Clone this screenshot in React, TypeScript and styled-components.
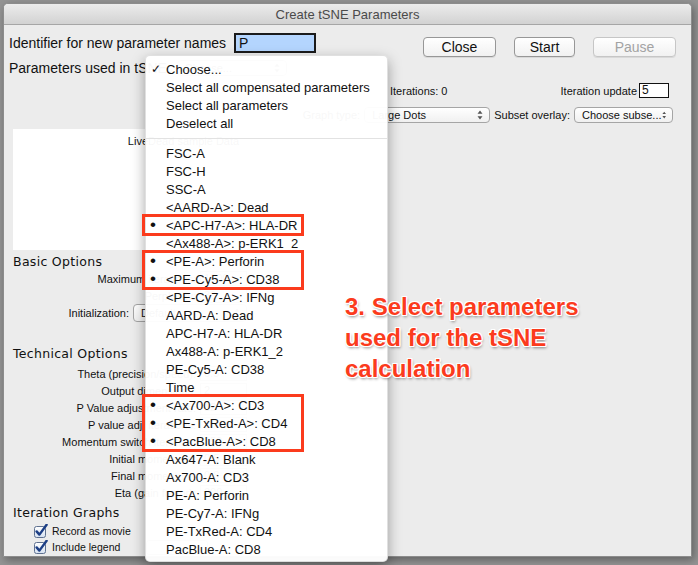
import React from 'react';
import styled, { createGlobalStyle } from 'styled-components';

const SANS = `"Liberation Sans", Arial, sans-serif`;
const LUCIDA = `"DejaVu Sans", "Liberation Sans", sans-serif`;
const RED = '#fb3b1d';

const GlobalStyle = createGlobalStyle`
  html, body { margin: 0; padding: 0; }
  body {
    width: 698px;
    height: 565px;
    overflow: hidden;
    background: #949494;
    font-family: ${SANS};
    color: #111;
  }
`;

const Window = styled.div`
  position: relative;
  margin: 3px 0 0 3px;
  width: 689px;
  height: 554px;
  box-sizing: border-box;
  display: flex;
  flex-direction: column;
  background: #ececec;
  border: 1px solid #8c8c8c;
  border-radius: 5px 5px 0 0;
  box-shadow: 2px 3px 8px rgba(0, 0, 0, 0.35);
`;

const TitleBar = styled.div`
  height: 21px;
  box-sizing: border-box;
  display: flex;
  align-items: center;
  justify-content: center;
  background: linear-gradient(#ececec, #d2d2d2);
  border-bottom: 1px solid #a6a6a6;
  border-radius: 4px 4px 0 0;
  font-size: 13px;
  color: #4a4a4a;
`;

const Content = styled.div`
  display: flex;
  flex-direction: column;
  padding: 0 15px 0 5px;
`;

const TopRow = styled.div`
  display: flex;
  align-items: flex-start;
  padding-top: 8px;
`;

const FieldGroup = styled.div`
  display: flex;
  align-items: center;
  height: 20px;
  gap: 8px;
`;

const BigLabel = styled.span`
  font-size: 14px;
  white-space: nowrap;
`;

const NameInput = styled.div`
  width: 82px;
  height: 20px;
  box-sizing: border-box;
  border: 2px solid #1b1b1b;
  background: #b4d5fe;
  font-size: 14px;
  line-height: 16px;
  padding-left: 3px;
`;

const ButtonGroup = styled.div`
  display: flex;
  gap: 18px;
  margin-left: auto;
  margin-top: 4px;
`;

const Button = styled.div<{ $w: number; $disabled?: boolean }>`
  width: ${(p) => p.$w}px;
  height: 20px;
  box-sizing: border-box;
  display: flex;
  align-items: center;
  justify-content: center;
  border: 1px solid ${(p) => (p.$disabled ? '#c6c6c6' : '#979797')};
  border-radius: 4px;
  background: linear-gradient(#ffffff, #f1f1f1);
  box-shadow: 0 1px 0 rgba(0, 0, 0, 0.08);
  font-size: 14px;
  color: ${(p) => (p.$disabled ? '#a3a3a3' : '#111')};
`;

const ParamRow = styled.div`
  display: flex;
  align-items: center;
  gap: 6px;
  height: 16px;
  margin-top: 3px;
`;

const StatusRow = styled.div`
  display: flex;
  align-items: center;
  height: 15px;
  margin: 7px 7px 0 381px;
  font-size: 11px;
`;

const UpdateField = styled.div`
  margin-left: auto;
  display: flex;
  align-items: center;
  gap: 2px;
`;

const SmallBox = styled.div`
  width: 30px;
  height: 15px;
  box-sizing: border-box;
  border: 1px solid #111;
  background: #fff;
  font-size: 12px;
  line-height: 13px;
  padding-left: 2px;
`;

const SelectRow = styled.div`
  display: flex;
  align-items: center;
  justify-content: flex-end;
  height: 16px;
  margin: 9px 3px 0 0;
  font-size: 11px;
`;

const SmallLabel = styled.span`
  font-size: 11px;
  white-space: nowrap;
  margin: 0 4px;
`;

const Select = styled.div<{ $w: number; $h?: number }>`
  width: ${(p) => p.$w}px;
  height: ${(p) => p.$h ?? 16}px;
  box-sizing: border-box;
  display: flex;
  align-items: center;
  justify-content: space-between;
  padding: 0 6px 0 7px;
  border: 1px solid #a5a5a5;
  border-radius: 4px;
  background: linear-gradient(#ffffff, #f0f0f0);
  font-size: 11px;
  white-space: nowrap;
  overflow: hidden;
`;

const Body = styled.div`
  display: flex;
  flex-direction: column;
  margin-top: 6px;
  padding-left: 4px;
`;

const Plot = styled.div`
  width: 341px;
  height: 121px;
  background: #fff;
  display: flex;
  justify-content: center;
  padding-top: 6px;
  box-sizing: border-box;
  font-size: 11px;
`;

const Options = styled.div`
  width: 234px;
  display: flex;
  flex-direction: column;
`;

const SectionTitle = styled.div<{ $top: number }>`
  font-family: ${LUCIDA};
  font-size: 12.5px;
  line-height: 16px;
  letter-spacing: 0.3px;
  margin-top: ${(p) => p.$top}px;
`;

const OptRow = styled.div<{ $h?: number }>`
  display: flex;
  align-items: center;
  justify-content: flex-end;
  gap: 4px;
  height: ${(p) => p.$h ?? 17}px;
  font-size: 11px;
  white-space: nowrap;
`;

const NumInput = styled.div`
  width: 47px;
  height: 15px;
  box-sizing: border-box;
  border: 1px solid #9c9c9c;
  background: #fff;
  font-size: 11px;
  line-height: 13px;
  padding-left: 3px;
`;

const TechRows = styled.div`
  margin-top: 3px;
  display: flex;
  flex-direction: column;
`;

const CheckList = styled.div`
  margin-top: 2px;
  display: flex;
  flex-direction: column;
`;

const CheckRow = styled.div`
  display: flex;
  align-items: center;
  gap: 4px;
  height: 16px;
  padding-left: 21px;
  font-size: 10.5px;
`;

const TinyButton = styled.div`
  margin-left: 22px;
  width: 60px;
  height: 13px;
  border: 1px solid #a5a5a5;
  border-radius: 3px;
  background: #f7f7f7;
`;

const Menu = styled.div`
  position: absolute;
  left: 141px;
  top: 51px;
  width: 243px;
  padding: 4px 0 3px;
  box-sizing: border-box;
  background: rgba(255, 255, 255, 0.97);
  border: 1px solid rgba(0, 0, 0, 0.12);
  border-radius: 5px;
  box-shadow: 0 5px 14px rgba(0, 0, 0, 0.35);
  font-size: 13px;
  color: #111;
`;

const MenuItem = styled.div`
  display: grid;
  grid-template-columns: 20px 1fr;
  align-items: center;
  height: 18px;
  white-space: nowrap;
`;

const Mark = styled.span<{ $bullet?: boolean }>`
  padding-left: ${(p) => (p.$bullet ? 4 : 5)}px;
  font-size: ${(p) => (p.$bullet ? 17 : 12)}px;
  line-height: 18px;
`;

const Separator = styled.div`
  height: 12px;
  display: flex;
  align-items: center;
  &::after {
    content: '';
    flex: 1;
    height: 1px;
    background: #e2e2e2;
  }
`;

const MarkedGroup = styled.div`
  margin-left: -2px;
  padding-left: 2px;
  width: 156px;
  outline: 3px solid ${RED};
  outline-offset: -1px;
`;

const Note = styled.div`
  position: absolute;
  left: 341px;
  top: 287px;
  font-family: ${SANS};
  font-weight: 700;
  font-size: 24px;
  line-height: 31px;
  color: ${RED};
  text-shadow: 1px 0 0 #fff, -1px 0 0 #fff, 0 1px 0 #fff, 0 -1px 0 #fff,
    1px 1px 0 #fff, -1px -1px 0 #fff, 1px -1px 0 #fff, -1px 1px 0 #fff,
    1px 2px 3px rgba(0, 0, 0, 0.45);
`;

function Stepper() {
  return (
    <svg width="6" height="10" viewBox="0 0 6 10">
      <path d="M3 0.5 L5.5 3.8 H0.5 Z M3 9.5 L5.5 6.2 H0.5 Z" fill="#555" />
    </svg>
  );
}

function CheckBox() {
  return (
    <svg width="14" height="14" viewBox="0 0 14 14">
      <defs>
        <linearGradient id="cb" x1="0" y1="0" x2="0" y2="1">
          <stop offset="0" stopColor="#ffffff" />
          <stop offset="1" stopColor="#d6e1f0" />
        </linearGradient>
      </defs>
      <rect x="0.5" y="2.5" width="11" height="11" rx="2" fill="url(#cb)" stroke="#5f7190" />
      <path d="M2.6 7.4 L5.4 10.6 L12.6 0.8" fill="none" stroke="#1d3f86" strokeWidth="2.4" strokeLinecap="round" strokeLinejoin="round" />
    </svg>
  );
}

const headItems = ['Select all compensated parameters', 'Select all parameters', 'Deselect all'];

const paramBlocks: { marked: boolean; items: string[] }[] = [
  { marked: false, items: ['FSC-A', 'FSC-H', 'SSC-A', '<AARD-A>: Dead'] },
  { marked: true, items: ['<APC-H7-A>: HLA-DR'] },
  { marked: false, items: ['<Ax488-A>: p-ERK1_2'] },
  { marked: true, items: ['<PE-A>: Perforin', '<PE-Cy5-A>: CD38'] },
  {
    marked: false,
    items: ['<PE-Cy7-A>: IFNg', 'AARD-A: Dead', 'APC-H7-A: HLA-DR', 'Ax488-A: p-ERK1_2', 'PE-Cy5-A: CD38', 'Time'],
  },
  { marked: true, items: ['<Ax700-A>: CD3', '<PE-TxRed-A>: CD4', '<PacBlue-A>: CD8'] },
  {
    marked: false,
    items: ['Ax647-A: Blank', 'Ax700-A: CD3', 'PE-A: Perforin', 'PE-Cy7-A: IFNg', 'PE-TxRed-A: CD4', 'PacBlue-A: CD8'],
  },
];

const techOptions = [
  ['Theta (precision/speed):', '0.5'],
  ['Output dimensions:', '2'],
  ['P Value adjustment rate:', '12'],
  ['P value adj. iterations:', '250'],
  ['Momentum switch iteration:', '250'],
  ['Initial momentum:', '0.5'],
  ['Final momentum:', '0.8'],
  ['Eta (gain factor):', '200'],
];

function ParamMenu() {
  return (
    <Menu>
      <MenuItem>
        <Mark>✓</Mark>
        <span>Choose...</span>
      </MenuItem>
      {headItems.map((t) => (
        <MenuItem key={t}>
          <span />
          <span>{t}</span>
        </MenuItem>
      ))}
      <Separator />
      {paramBlocks.map((block, i) => {
        const rows = block.items.map((t) => (
          <MenuItem key={t}>
            <Mark $bullet>{block.marked ? '•' : ''}</Mark>
            <span>{t}</span>
          </MenuItem>
        ));
        return block.marked ? <MarkedGroup key={i}>{rows}</MarkedGroup> : <div key={i}>{rows}</div>;
      })}
    </Menu>
  );
}

export default function App() {
  return (
    <>
      <GlobalStyle />
      <Window>
        <TitleBar>Create tSNE Parameters</TitleBar>
        <Content>
          <TopRow>
            <FieldGroup>
              <BigLabel>Identifier for new parameter names</BigLabel>
              <NameInput>P</NameInput>
            </FieldGroup>
            <ButtonGroup>
              <Button $w={73}>Close</Button>
              <Button $w={61}>Start</Button>
              <Button $w={83} $disabled>
                Pause
              </Button>
            </ButtonGroup>
          </TopRow>

          <ParamRow>
            <BigLabel>Parameters used in tSNE:</BigLabel>
            <Select $w={110}>
              Choose... <Stepper />
            </Select>
          </ParamRow>

          <StatusRow>
            <span>Iterations: 0</span>
            <UpdateField>
              <span>Iteration update</span>
              <SmallBox>5</SmallBox>
            </UpdateField>
          </StatusRow>

          <SelectRow>
            <SmallLabel>Graph type:</SmallLabel>
            <Select $w={126}>
              Large Dots <Stepper />
            </Select>
            <SmallLabel>Subset overlay:</SmallLabel>
            <Select $w={99}>
              Choose subse... <Stepper />
            </Select>
          </SelectRow>

          <Body>
            <Plot>LiveDead sample Data</Plot>
            <Options>
              <SectionTitle $top={4}>Basic Options</SectionTitle>
              <OptRow>
                Maximum iterations:<NumInput>1000</NumInput>
              </OptRow>
              <OptRow>
                Perplexity:<NumInput>30</NumInput>
              </OptRow>
              <OptRow $h={18}>
                Initialization:
                <Select $w={114} $h={18}>
                  Default <Stepper />
                </Select>
              </OptRow>

              <SectionTitle $top={24}>Technical Options</SectionTitle>
              <TechRows>
                {techOptions.map(([label, value]) => (
                  <OptRow key={label}>
                    {label}
                    <NumInput>{value}</NumInput>
                  </OptRow>
                ))}
              </TechRows>

              <SectionTitle $top={4}>Iteration Graphs</SectionTitle>
              <CheckList>
                <CheckRow>
                  <CheckBox />
                  Record as movie
                </CheckRow>
                <CheckRow>
                  <CheckBox />
                  Include legend
                  <TinyButton />
                </CheckRow>
              </CheckList>
            </Options>
          </Body>
        </Content>

        <ParamMenu />

        <Note>
          3. Select parameters
          <br />
          used for the tSNE
          <br />
          calculation
        </Note>
      </Window>
    </>
  );
}
